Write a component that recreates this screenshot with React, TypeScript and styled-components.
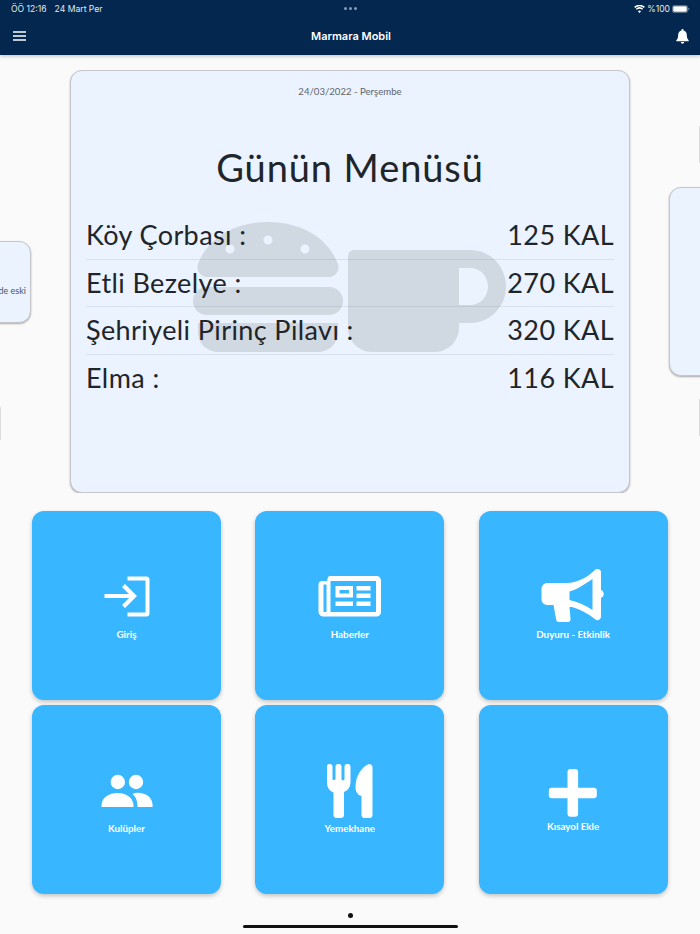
import React from "react";
import styled, { createGlobalStyle } from "styled-components";

const GlobalStyle = createGlobalStyle`
  html, body {
    margin: 0;
    padding: 0;
    background: #fafafa;
    font-family: "Lato", "Noto Sans", sans-serif;
  }
`;

const Page = styled.div`
  width: 700px;
  height: 934px;
  overflow: hidden;
  display: flex;
  flex-direction: column;
  background: #fafafa;
`;

const Header = styled.header`
  height: 55px;
  flex-shrink: 0;
  background: #03274e;
  color: #fff;
  box-shadow: 0 1px 4px rgba(0, 0, 0, 0.25);
  display: flex;
  flex-direction: column;
  position: relative;
`;

const StatusBar = styled.div`
  height: 17px;
  padding: 0 10px 0 11px;
  display: grid;
  grid-template-columns: 1fr auto 1fr;
  align-items: center;
  font-family: "Inter", sans-serif;
  font-size: 8.6px;
  color: #e4e9ef;
`;

const StatusLeft = styled.div`
  display: flex;
  gap: 8px;
`;

const StatusRight = styled.div`
  display: flex;
  justify-content: flex-end;
  align-items: center;
  gap: 2px;
`;

const Dots = styled.div`
  display: flex;
  gap: 2px;
`;

const Dot = styled.span`
  width: 3px;
  height: 3px;
  border-radius: 50%;
  background: #8d9cb0;
`;

const TitleBar = styled.div`
  flex: 1;
  padding: 0 11px 0 13px;
  display: flex;
  align-items: center;
  justify-content: space-between;
`;

const Title = styled.h1`
  margin: 0;
  font-family: "Inter", sans-serif;
  font-size: 11px;
  font-weight: 600;
`;

const Carousel = styled.section`
  margin-top: 15px;
  height: 423px;
  flex-shrink: 0;
  position: relative;
  overflow: hidden;
  display: flex;
  justify-content: center;
  align-items: center;
  gap: 39px;
`;

const Card = styled.article<{ $height: number }>`
  position: relative;
  flex: 0 0 560px;
  height: ${(p) => p.$height}px;
  box-sizing: border-box;
  background: #eaf3ff;
  border-radius: 12px;
  border: 1px solid #c4c6c9;
  box-shadow: 0 1px 2px rgba(0, 0, 0, 0.32);
`;

const SideText = styled.div`
  height: 100%;
  box-sizing: border-box;
  padding: 18px 4px 0 0;
  display: flex;
  align-items: center;
  justify-content: flex-end;
  font-size: 9px;
  color: #50555c;
`;

const Sliver = styled.span<{ $left?: boolean; $top: number; $height: number }>`
  position: absolute;
  ${(p) => (p.$left ? "left: 0;" : "right: 0;")}
  top: ${(p) => p.$top}px;
  width: 1px;
  height: ${(p) => p.$height}px;
  background: #dcdcdc;
`;

const MainCard = styled(Card)`
  padding: 14px 15px 0;
  display: flex;
  flex-direction: column;
  color: #212529;
`;

const Watermark = styled.svg`
  position: absolute;
  left: 122px;
  top: 151px;
`;

const DateLine = styled.div`
  position: relative;
  text-align: center;
  font-size: 9.6px;
  line-height: 14px;
  color: #5f646b;
`;

const MenuTitle = styled.h2`
  position: relative;
  margin: 45px 0 0;
  text-align: center;
  font-size: 38px;
  line-height: 46px;
  font-weight: 400;
  letter-spacing: 0.9px;
`;

const MenuList = styled.ul`
  position: relative;
  list-style: none;
  margin: 22px 0 0;
  padding: 0;
`;

const MenuRow = styled.li`
  height: 47.7px;
  padding-bottom: 2px;
  display: flex;
  align-items: center;
  justify-content: space-between;
  font-size: 27px;
  letter-spacing: 0.4px;
  border-bottom: 1px solid rgba(0, 0, 0, 0.07);
  box-sizing: border-box;

  &:last-child {
    border-bottom: 0;
  }
`;

const TileGrid = styled.nav`
  margin-top: 18px;
  padding: 0 32px;
  display: grid;
  grid-template-columns: repeat(3, 189px);
  grid-auto-rows: 188.5px;
  column-gap: 34.3px;
  row-gap: 5.5px;
`;

const Tile = styled.a`
  background: #38b6ff;
  border-radius: 12px;
  box-shadow: 0 2px 4px rgba(0, 0, 0, 0.22);
  color: #fff;
  display: flex;
  flex-direction: column;
  align-items: center;
  justify-content: center;
`;

const TileIcon = styled.svg`
  display: block;
  fill: #fff;
`;

const TileLabel = styled.span`
  font-size: 9.8px;
  line-height: 14px;
  font-weight: 700;
`;

const HomeArea = styled.div`
  margin-top: 19px;
  display: flex;
  flex-direction: column;
  align-items: center;
  gap: 7px;
`;

const PageDot = styled.span`
  width: 5px;
  height: 5px;
  border-radius: 50%;
  background: #111;
`;

const HomeBar = styled.span`
  width: 215px;
  height: 3.5px;
  border-radius: 2px;
  background: #111;
`;

const Wifi = () => (
  <svg width="11" height="8" viewBox="0 0 24 18" fill="#fff">
    <path d="M12 18l-3.6-4.2a5.4 5.4 0 0 1 7.2 0zM5.9 10.900L3.7 8.3a12.6 12.6 0 0 1 16.6 0l-2.2 2.6a9.2 9.2 0 0 0-12.2 0zM2.3 6.6L0 4a18 18 0 0 1 24 0l-2.3 2.6a14.6 14.6 0 0 0-19.4 0z" />
  </svg>
);

const Battery = () => (
  <svg width="18" height="8" viewBox="0 0 18 8">
    <rect x="0.4" y="0.4" width="15.2" height="7.2" rx="2" fill="none" stroke="#8d9cb0" strokeWidth="0.7" />
    <rect x="1.2" y="1.2" width="13.6" height="5.6" rx="1.2" fill="#fff" />
    <path d="M16.4 2.8c.7.2 1 .7 1 1.2s-.3 1-1 1.2z" fill="#8d9cb0" />
  </svg>
);

const MenuIcon = () => (
  <svg width="13" height="10" viewBox="0 0 13 10" stroke="#fff" strokeWidth="1.4">
    <path d="M0 1h13M0 5h13M0 9h13" />
  </svg>
);

const BellIcon = () => (
  <svg width="13" height="15" viewBox="0 0 13 15" fill="#fff">
    <path d="M6.5 0c.6 0 1 .4 1 1v.6c2 .4 3.3 2.1 3.3 4.2 0 3.2.7 4.2 1.8 5.4.3.4.1 1-.5 1H.9c-.6 0-.8-.6-.5-1 1.1-1.2 1.8-2.2 1.8-5.4 0-2.1 1.3-3.8 3.3-4.2V1c0-.6.4-1 1-1zM4.900 13h3.200c0 1-.7 1.700-1.600 1.700S4.900 14 4.900 13z" />
  </svg>
);

const LoginIcon = () => (
  <TileIcon width="60" height="58" viewBox="96.5 569 60 58">
    <path d="M127 576.500h19c1.700 0 3 1.300 3 3v34c0 1.700-1.300 3-3 3h-19v-4h18v-32h-18z" />
    <path d="M104 594h24.500l-7-7 3-3 12 12-12 12-3-3 7-7H104z" />
  </TileIcon>
);

const NewsIcon = () => (
  <TileIcon width="64" height="58" viewBox="318.5 569 64 58">
    <path
      fillRule="evenodd"
      d="M330 576h47c2.500 0 4.500 2 4.500 4.500v31.500c0 2.500-2 4.500-4.500 4.500h-53c-2.800 0-5-2.200-5-5v-27c0-2 1.600-3.500 3.500-3.500h5c.5-2.500 1-4.500 2.500-5.500zm1 5v31h45.500v-31zm-6 3.500c-.6 0-1 .4-1 1v25.500c0 .6.400 1 1 1h2v-27.500z"
    />
    <path fillRule="evenodd" d="M336 586h17.500v11.500H336zm4 4v3.500h9.500V590z" />
    <path d="M357 586h14v4.500h-14zM357 593.500h14v4.500h-14zM336 601.500h17.500v4.500H336zM357 601.500h14v4.500h-14z" />
  </TileIcon>
);

const MegaphoneIcon = () => (
  <TileIcon width="64" height="58" viewBox="541.5 569 64 58">
    <path
      fillRule="evenodd"
      d="M596 569.500c2.800-1.700 5.500.2 5.500 3v17.500c1.700.5 2.700 2 2.700 3.900s-1 3.400-2.700 3.900v18.700c0 2.900-2.900 4.700-5.500 3-7.500-6-16-10.500-23.500-12.500l-2.500 0 1 12c.3 1.700-1 3-2.500 3h-9c-1.500 0-2.500-1-2.800-2.300l-2.700-14.700H548c-3.500 0-6-2.500-6-6v-10c0-3.300 2.500-6 6-6h19c11-.5 20-5 29-13.500zm-3 9.500c-7 4.500-14.500 10-23 12.500V600c8.500 2 16 5.300 23 10z"
    />
  </TileIcon>
);

const ClubsIcon = () => (
  <TileIcon width="60" height="58" viewBox="96.5 763 60 58">
    <circle cx="117.3" cy="782" r="7.2" />
    <circle cx="135.5" cy="782" r="7.2" />
    <path d="M101 807c0-.7 0-2.300.2-3.200 1-6.500 7.300-10.800 15.800-10.800s14.800 4.300 15.800 10.800c.2.900.2 2.500.2 3.200z" />
    <path d="M136 792.800c9.500-.6 15.500 4.700 16 11.200.1 1 .1 2.200.1 3H137c0-6-1.600-10.500-5-12.800 1-.7 2.500-1.300 4-1.400z" />
  </TileIcon>
);

const DiningIcon = () => (
  <TileIcon width="60" height="58" viewBox="319.5 763 60 58">
    <path d="M329.500 764c1.500 0 2.500 1 2.500 2.500v12.500c0 1.500 3 1.500 3-.2v-12.300c0-1.500 1-2.500 2.500-2.500h1c1.500 0 2.500 1 2.500 2.500v12.500c0 1.700 3 1.700 3 0v-12.500c0-1.500 1-2.500 2.500-2.500h1c1.500 0 2.500 1 2.500 2.500v15.500c0 5-2.500 8.500-6.500 10V815c0 1.700-1.300 3-3 3h-4.500c-1.700 0-3-1.300-3-3v-22.500c-4-1.500-6.500-5-6.500-10v-16c0-1.500.8-2.500 2-2.500z" />
    <path d="M368.500 764c2 0 3.500 1.500 3.500 3.500V815c0 1.700-1.300 3-3 3h-5c-1.700 0-3-1.300-3-3v-19c-3.800-1-6-4-6-9 0-11 6.500-20.500 13.500-23z" />
  </TileIcon>
);

const PlusIcon = () => (
  <TileIcon width="60" height="54" viewBox="543.5 765 60 54">
    <rect x="549.3" y="787.7" width="48" height="10.6" rx="3" />
    <rect x="568" y="769" width="10.6" height="47.7" rx="3" />
  </TileIcon>
);

const menu = [
  { name: "Köy Çorbası :", kal: "125 KAL" },
  { name: "Etli Bezelye :", kal: "270 KAL" },
  { name: "Şehriyeli Pirinç Pilavı :", kal: "320 KAL" },
  { name: "Elma :", kal: "116 KAL" },
];

const tiles = [
  { label: "Giriş", icon: <LoginIcon /> },
  { label: "Haberler", icon: <NewsIcon /> },
  { label: "Duyuru - Etkinlik", icon: <MegaphoneIcon /> },
  { label: "Kulüpler", icon: <ClubsIcon /> },
  { label: "Yemekhane", icon: <DiningIcon /> },
  { label: "Kısayol Ekle", icon: <PlusIcon /> },
];

export default function App() {
  return (
    <>
      <GlobalStyle />
      <Page>
        <Header>
          <StatusBar>
            <StatusLeft>
              <span>ÖÖ 12:16</span>
              <span>24 Mart Per</span>
            </StatusLeft>
            <Dots>
              <Dot />
              <Dot />
              <Dot />
            </Dots>
            <StatusRight>
              <Wifi />
              <span>%100</span>
              <Battery />
            </StatusRight>
          </StatusBar>
          <TitleBar>
            <MenuIcon />
            <Title>Marmara Mobil</Title>
            <BellIcon />
          </TitleBar>
        </Header>

        <Carousel>
          <Card $height={82}>
            <SideText>de eski</SideText>
          </Card>
          <MainCard $height={423}>
            <Watermark width="313" height="130" viewBox="193 222 313 130" fill="#d0d8e2">
              <path
                fillRule="evenodd"
                d="M268 222c38 0 62 20 70 42 2 6-2 13-10 13H208c-8 0-12-7-10-13 8-22 32-42 70-42zm-38 22.500a4.500 4.500 0 1 0 0 9 4.500 4.500 0 0 0 0-9zm38-9a4.500 4.500 0 1 0 0 9 4.500 4.500 0 0 0 0-9zm37 9a4.500 4.500 0 1 0 0 9 4.500 4.500 0 0 0 0-9z"
              />
              <rect x="193" y="287" width="150" height="28" rx="14" />
              <path d="M198 323h140v9c0 11-9 20-20 20H218c-11 0-20-9-20-20z" />
              <path
                fillRule="evenodd"
                d="M354 250h116c20 0 36 16 36 36.500S490 323 470 323h-11v5c0 13-11 24-24 24h-63c-13 0-24-11-24-24v-72c0-3 3-6 6-6zm105 18v37h11c10 0 18-8 18-18.500S480 268 470 268z"
              />
            </Watermark>
            <DateLine>24/03/2022 - Perşembe</DateLine>
            <MenuTitle>Günün Menüsü</MenuTitle>
            <MenuList>
              {menu.map((item) => (
                <MenuRow key={item.name}>
                  <span>{item.name}</span>
                  <span>{item.kal}</span>
                </MenuRow>
              ))}
            </MenuList>
          </MainCard>
          <Card $height={189} />
          <Sliver $left $top={337} $height={33} />
          <Sliver $top={56} $height={37} />
          <Sliver $top={329} $height={37} />
        </Carousel>

        <TileGrid>
          {tiles.map((tile) => (
            <Tile key={tile.label}>
              {tile.icon}
              <TileLabel>{tile.label}</TileLabel>
            </Tile>
          ))}
        </TileGrid>

        <HomeArea>
          <PageDot />
          <HomeBar />
        </HomeArea>
      </Page>
    </>
  );
}
